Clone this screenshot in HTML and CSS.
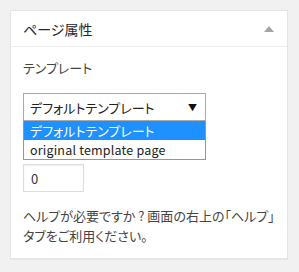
FILE: index.html
```html
<!DOCTYPE html>
<html lang="ja">
<head>
  <meta charset="UTF-8">
  <title>ページ属性</title>
  <link rel="stylesheet" href="styles.css">
</head>
<body>

  <div class="postbox">
    <div class="hndle">
      <span>ページ属性</span>
      <span class="toggle"></span>
    </div>
    <div class="inside">
      <p class="field-title">テンプレート</p>
      <div class="select-wrap">
        <div class="select">
          <span>デフォルトテンプレート</span>
          <span class="caret">▼</span>
        </div>
        <!-- open dropdown list -->
        <ul class="options">
          <li class="selected">デフォルトテンプレート</li>
          <li class="latin">original template page</li>
        </ul>
      </div>
      <p class="field-title order">順序</p>
      <input type="text" class="menu-order" value="0">
      <p class="help">ヘルプが必要ですか ? 画面の右上の「ヘルプ」タブをご利用ください。</p>
    </div>
  </div>

</body>
</html>
```

FILE: styles.css
```css
body {
  margin: 0;
  padding: 10px;
  background-color: #f1f1f1;
  font-family: "Noto Sans CJK JP", "Noto Sans", sans-serif;
  font-size: 13px;
  font-feature-settings: "palt";
  color: #444;
}
.postbox {
  width: 276px;
  background-color: #fff;
  border: 1px solid #e5e5e5;
  box-shadow: 0 1px 1px rgba(0, 0, 0, 0.04);
}
.hndle {
  display: flex;
  justify-content: space-between;
  align-items: center;
  height: 35px;
  padding: 0 13px 0 12px;
  border-bottom: 1px solid #eee;
  font-size: 14px;
  color: #23282d;
}
.toggle {
  width: 0;
  height: 0;
  border-left: 5px solid transparent;
  border-right: 5px solid transparent;
  border-bottom: 6px solid #a0a5aa;
}
.inside {
  padding: 0 12px 12px;
}
.field-title {
  margin: 11px 0 0;
  line-height: 20px;
}
.select-wrap {
  position: relative;
  margin-top: 15px;
  width: 183px;
}
.select {
  display: flex;
  justify-content: space-between;
  align-items: center;
  height: 26px;
  padding: 0 8px 0 6px;
  border: 1px solid #a9a9a9;
  color: #222;
}
.caret {
  font-size: 9px;
  color: #111;
}
.options {
  position: absolute;
  top: 28px;
  left: 0;
  right: 0;
  margin: 0;
  padding: 0;
  list-style: none;
  background-color: #fff;
  border: 1px solid #7f9db9;
  border-top: none;
}
.options li {
  height: 19px;
  line-height: 19px;
  padding-left: 6px;
  color: #222;
}
.options li.selected {
  background-color: #1e90ff;
  color: #fff;
}
.options li.latin {
  font-size: 12.5px;
  letter-spacing: 0.2px;
}
.order {
  margin-top: 17px;
}
.menu-order {
  display: block;
  box-sizing: border-box;
  width: 61px;
  height: 28px;
  margin: 6px 0 0;
  padding: 0 7px;
  border: 1px solid #ddd;
  box-shadow: inset 0 1px 2px rgba(0, 0, 0, 0.07);
  font-family: inherit;
  font-size: 13px;
  color: #32373c;
}
.help {
  margin: 14px 0 0;
  line-height: 20px;
}
```
